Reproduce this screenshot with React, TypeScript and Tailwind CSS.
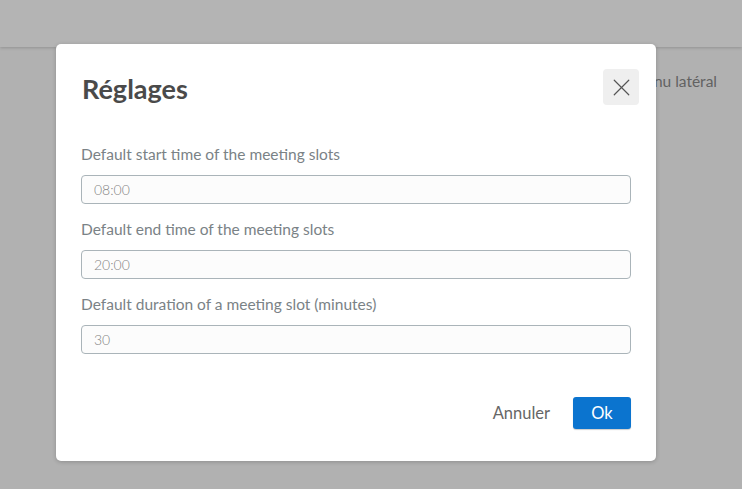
import { X } from "lucide-react"

const fields = [
    { label: "Default start time of the meeting slots", value: "08:00" },
    { label: "Default end time of the meeting slots", value: "20:00" },
    { label: "Default duration of a meeting slot (minutes)", value: "30" },
]

export default function App() {
    return (
        <div className="relative w-[742px] h-[489px] overflow-hidden bg-[#b1b1b1] font-['Lato','Noto_Sans',sans-serif]">
            {/* page behind the overlay */}
            <div className="h-[47px] bg-[#b4b4b4] shadow-[0_1px_3px_rgba(0,0,0,0.18)]" />
            <div className="flex justify-end pr-[25px] pt-[23px]">
                <span className="text-[15.5px] text-[#626262]">Afficher le menu latéral</span>
            </div>

            {/* modal */}
            <div className="absolute left-[56px] top-[44px] w-[600px] h-[417px] bg-white rounded-[5px] shadow-[0_1px_4px_rgba(0,0,0,0.2)] flex flex-col">
                <div className="flex items-start justify-between pl-[26px] pr-[17px] pt-[25px]">
                    <h1 className="text-[27px] font-bold text-[#4a4a4a] leading-none pt-[6px]">Réglages</h1>
                    <button className="w-[36px] h-[36px] rounded-[4px] bg-[#efefef] flex items-center justify-center text-[#555]">
                        <X size={29} strokeWidth={1} />
                    </button>
                </div>

                <div className="flex flex-col gap-[16px] px-[25px] pt-[40px]">
                    {fields.map((f) => (
                        <div key={f.label} className="flex flex-col gap-[12px]">
                            <label className="text-[15.5px] leading-[18px] text-[#7a8286]">{f.label}</label>
                            <input
                                readOnly
                                value={f.value}
                                className="h-[29px] w-full rounded-[4px] border border-[#aab4b9] bg-[#fcfcfc] px-[12px] text-[14px] font-light text-[#858585] outline-none"
                            />
                        </div>
                    ))}
                </div>

                <div className="flex items-center justify-end gap-[23px] pr-[25px] pt-[43px]">
                    <button className="text-[16.5px] text-[#666]">Annuler</button>
                    <button className="w-[58px] h-[32px] rounded-[3px] bg-[#0b74cf] text-white text-[16.5px] shadow-[0_1px_1px_rgba(0,0,0,0.2)]">
                        Ok
                    </button>
                </div>
            </div>
        </div>
    )
}
